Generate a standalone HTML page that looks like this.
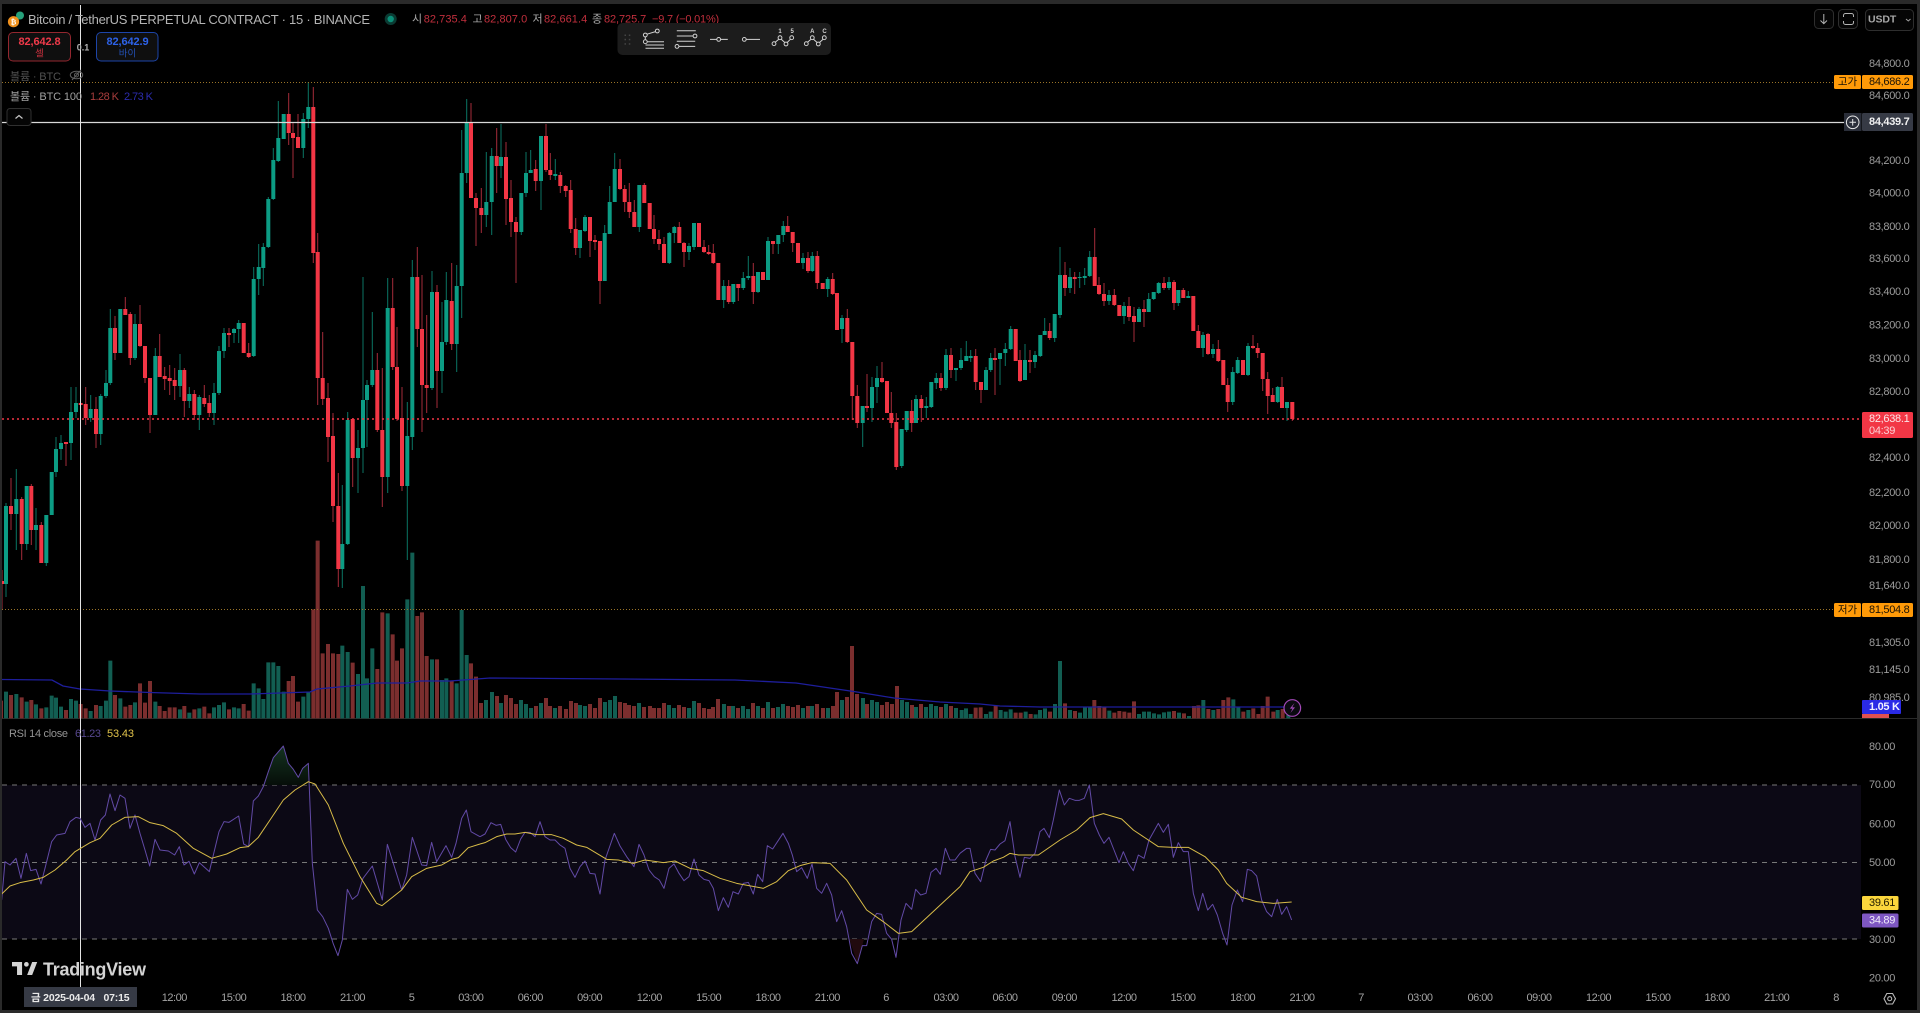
<!DOCTYPE html>
<html lang="ko"><head><meta charset="utf-8"><title>Bitcoin / TetherUS</title>
<style>
html,body{margin:0;padding:0;background:#000;width:1920px;height:1013px;overflow:hidden}
svg{display:block}
text{font-family:"Liberation Sans","Noto Sans CJK KR",sans-serif;white-space:pre}
.p{font-size:11px;letter-spacing:-.3px;fill:#9c9c9c;dominant-baseline:central;transform:translateY(1px)}
.t{font-size:11px;letter-spacing:-.5px;fill:#a4a4a4;text-anchor:middle;dominant-baseline:central}
.c{font-size:11px;letter-spacing:-.3px;dominant-baseline:central}
.h{font-size:11px;dominant-baseline:central;letter-spacing:-.2px}
.l{transform:translateY(1px)}
.r{fill:#c22f3d}
.g{fill:#a8a8a8}
</style></head><body>
<svg width="1920" height="1013" viewBox="0 0 1920 1013" xmlns="http://www.w3.org/2000/svg">
<rect width="1920" height="1013" fill="#000"/>

<!-- RSI band -->
<rect x="2" y="785" width="1859" height="154" fill="#0c0915"/>
<path d="M2 785H1861M2 862.5H1861M2 939H1861" stroke="#787878" stroke-width="1" stroke-dasharray="5 5" fill="none"/>
<path d="M0 718.5H1917" stroke="#2a2a2a" stroke-width="1"/>

<!-- Volume bars -->
<g transform="translate(0,380) scale(.33333)" fill="none" stroke-width="12">
<path stroke="#7b2e2e" d="M3 1015V962M33 1015V945M65 1015V952M94 1015V960M124 1015V985M198 1015V990M242 1015V972M257 1015V985M288 1015V975M345 1015V945M376 1015V980M391 1015V975M420 1015V910M435 1015V968M450 1015V903M479 1015V978M494 1015V993M509 1015V982M524 1015V982M553 1015V978M583 1015V988M613 1015V980M628 1015V1000M687 1015V988M731 1015V972M746 1015V992M866 1015V903M879 1015V888M894 1015V965M940 1015V688M953 1015V482M968 1015V820M984 1015V792M999 1015V820M1015 1015V822M1058 1015V848M1132 1015V867M1147 1015V697M1178 1015V763M1191 1015V842M1206 1015V805M1252 1015V708M1266 1015V697M1280 1015V828M1311 1015V838M1355 1015V903M1413 1015V850M1428 1015V890"/>
<path stroke="#125e52" d="M18 1015V935M49 1015V942M80 1015V965M108 1015V973M139 1015V982M155 1015V947M168 1015V953M183 1015V980M213 1015V957M228 1015V962M272 1015V993M302 1015V978M318 1015V962M331 1015V842M361 1015V955M405 1015V967M466 1015V965M540 1015V988M568 1015V998M598 1015V985M642 1015V982M657 1015V975M672 1015V967M702 1015V982M716 1015V985M761 1015V910M776 1015V925M790 1015V957M805 1015V847M820 1015V847M835 1015V858M851 1015V935M910 1015V950M925 1015V935M1027 1015V797M1043 1015V816M1074 1015V882M1089 1015V618M1101 1015V895M1117 1015V805M1163 1015V700M1222 1015V658M1237 1015V518M1296 1015V838M1326 1015V900M1339 1015V895M1370 1015V910M1385 1015V690M1400 1015V825"/>
</g>
<g fill="none" stroke-width="4">
<path stroke="#7b2e2e" d="M481 718V703M497 718V696M506 718V695M511 718V698M516 718V704M536 718V706M546 718V698M550 718V706M560 718V706M566 718V709M571 718V701M576 718V703M590 718V704M595 718V708M600 718V698M620 718V702M625 718V703M629 718V705M634 718V706M644 718V707M650 718V706M654 718V708M659 718V708M664 718V703M679 718V705M684 718V707M699 718V703M704 718V708M709 718V709M713 718V707M718 718V699M729 718V706M738 718V708M753 718V703M763 718V708M773 718V708M788 718V706M793 718V707M798 718V705M808 718V706M817 718V704M823 718V708M833 718V706M837 718V692M847 718V697M852 718V646M857 718V694M867 718V704M882 718V705M887 718V702M892 718V704M897 718V686M912 718V705M921 718V704M941 718V707M951 718V706"/>
<path stroke="#125e52" d="M486 718V700M492 718V692M501 718V703M521 718V700M526 718V704M531 718V708M541 718V703M555 718V708M580 718V705M585 718V706M605 718V702M610 718V700M615 718V696M639 718V703M669 718V705M674 718V708M689 718V708M694 718V701M724 718V704M733 718V706M743 718V706M748 718V709M758 718V706M768 718V702M778 718V707M783 718V704M803 718V708M812 718V706M828 718V708M842 718V700M863 718V698M872 718V700M877 718V702M902 718V700M907 718V702M916 718V707M926 718V707M931 718V704M936 718V706M946 718V704M956 718V708"/>
</g>
<g transform="translate(960,640) scale(.33333)" fill="none" stroke-width="12">
<path stroke="#7b2e2e" d="M47 235V203M62 235V202M107 235V198M167 235V218M182 235V218M212 235V222M270 235V215M315 235V190M345 235V213M403 235V180M418 235V198M433 235V202M463 235V218M478 235V213M493 235V215M508 235V218M522 235V184M642 235V213M672 235V220M702 235V198M715 235V196M745 235V207M775 235V207M790 235V180M805 235V172M850 235V215M880 235V205M895 235V222M908 235V198M923 235V170M940 235V215M968 235V207"/>
<path stroke="#125e52" d="M5 235V210M18 235V205M32 235V222M78 235V222M92 235V215M122 235V210M137 235V215M152 235V208M197 235V215M227 235V223M240 235V210M255 235V205M285 235V192M300 235V63M330 235V210M360 235V218M375 235V202M390 235V200M448 235V212M537 235V222M552 235V215M567 235V215M582 235V220M597 235V223M612 235V217M627 235V215M657 235V218M687 235V228M730 235V180M760 235V210M820 235V178M835 235V202M865 235V210M953 235V210M985 235V225"/>
</g>
<!-- Volume MA -->
<path fill="none" stroke="#1e1e9c" stroke-width="1.300" d="M2 679.500L52 680 63 686 80 689 110 691 150 692.500 200 694 250 694 310 692 317 689 350 686 377 683 407 683 420 681 450 681 490 678 620 679 735 680 796 683 857 692 894 698 940 702 980 704 1000 706 1040 707 1285 707"/>

<!-- Wicks -->
<g fill="none" stroke-width="1">
<path stroke="#0b7565" d="M6 503V597M16.3 469V550M26.7 486V550M36 508V550M46.3 515V566M56 437V477M61 435V460M71 387V460M76 387V418M90.7 395V422M100.7 394V445M106 370V398M110.3 309V385M135 314V360M155.3 348V415M180 354V397M189.3 387V408M199.3 395V430M214 383V425M219 346V395M224 328V358M234 328V343M238.7 320V343M253.7 267V357M258.7 244V295M263.3 243V286M268.3 197V248M273.3 148V200M278.3 101V162M303.3 113V158M308.3 82V128M342.3 485V588M347.7 412V545M358 430V493M363 277V473M367 380V447M372.3 312V387M387.7 278V493M407.3 402V560M412.3 260V450M432 271V390M442 302V393M446.3 272V345M456.7 265V372M461.7 130V318M466.7 99V183M486.3 152V227M491.7 148V235M501 124V178M521.3 193V235M526 152V197M530.7 150V173M541 136V210M555.3 159V180M580 230V258M585 215V232M604.7 225V281M609.7 186V234M614.7 153V202M639.3 185V232M669.3 232V264M674.3 226V243M689 243V260M694 223V250M723.7 280V308M733.3 284V304M743.3 272V290M748.3 256V280M758 272V293M768 237V280M778.3 235V254M783.3 221V242M803 253V269M812.3 252V272M827.7 277V297M842 315V343M862.7 406V447M872 377V422M877 366V403M901.7 429V468M906.7 411V432M916 395V423M926.3 397V418M931.3 382V408M936.3 373V389M946 349V390M956 368V381M961 348V370M966.3 341V361M970.7 350V362M986 367V390M990.7 353V372M1000 353V385M1005.3 343V366M1010.7 326V350M1025 344V380M1035 351V368M1040.3 335V357M1044.7 318V335M1054.7 314V342M1060 247V318M1070 268V293M1079.7 272V288M1084.7 268V285M1089.7 251V277M1109 290V305M1124 302V324M1139 307V322M1148.7 293V312M1153.7 292V300M1158.7 282V294M1169 277V290M1178.3 290V306M1188.3 291V298M1203 332V357M1213 344V358M1232.7 367V405M1237.7 357V374M1248 343V376M1277.7 386V403M1287 402V421"/>
<path stroke="#a52c3a" d="M2 570V610M11 478V530M21.7 497V560M31.3 484V545M41.3 522V563M66 442V466M85.7 387V425M96 397V448M115 316V360M125.3 297V315M130.3 312V365M140 305V347M145 346V383M150 378V433M159.7 334V377M164.7 367V390M169.7 365V395M174.7 368V400M184.3 368V417M194.3 390V420M204.3 385V407M209.3 395V417M229 328V347M248.7 343V358M288.7 93V145M293 123V178M298 114V148M313.3 87V263M317.7 233V405M322.7 332V405M328 383V462M333 413V522M338.3 473V587M352.7 418V487M377.3 353V432M382.3 368V507M392.7 278V370M397 327V421M402 387V491M417.3 247V347M422 275V432M426.7 315V413M437 285V408M451.7 263V350M471 103V198M476 193V246M481.3 188V233M496.7 128V193M506 142V225M511 180V237M516 217V283M535.7 160V191M546 124V172M550.3 153V180M560.3 172V193M565.7 185V197M570.7 180V233M575.7 218V255M590 217V257M595 235V250M600 241V304M620 159V190M624.7 185V212M629.3 183V218M634.3 200V227M644.3 183V203M654 215V244M659 230V250M664 237V263M679.3 222V243M684 242V267M704 240V253M708.7 245V255M713.3 244V264M728.7 280V304M738.3 284V301M753.3 263V304M773 241V254M787.7 216V232M792.7 232V252M808 252V273M817.3 251V289M832.7 273V295M847.3 309V343M852.3 342V420M857.3 385V428M867 374V412M882 362V383M891.3 392V428M896.3 413V470M911.7 400V432M921.3 395V422M941 373V391M951 348V378M975.7 349V390M981 382V403M995 348V395M1020 350V382M1030 350V373M1049.7 323V340M1065 262V296M1074.7 272V294M1094.7 228V286M1099 277V295M1104 283V306M1114.3 289V306M1129 297V321M1134 307V342M1144 300V327M1164 277V290M1174 280V310M1183.3 288V298M1198.3 325V348M1208 333V355M1218.3 340V362M1227.7 378V412M1253 335V349M1257.7 343V358M1262.7 353V391M1267.7 372V414M1272.7 388V402M1282 377V408M1292.3 402V421"/>
</g>
<!-- Bodies -->
<g fill="none" stroke-width="4">
<path stroke="#0c9c84" d="M6 506V584M16.3 499V514M26.7 486V544M36 525V530M46.3 515V563M51.7 472V515M56 449V472M61 443V449M71 412V443M76 403V412M90.7 409V418M100.7 396V434M106 383V396M110.3 328V383M120.3 309V353M135 324V358M155.3 356V415M180 370V386M189.3 394V401M199.3 397V415M214 393V413M219 351V393M224 333V351M234 329V333M238.7 323V329M253.7 279V356M258.7 267V279M263.3 247V268M268.3 199V247M273.3 160V199M278.3 138V161M283.7 114V139M303.3 119V148M308.3 107V119M342.3 544V569M347.7 420V544M358 448V458M363 400V448M367 385V400M372.3 370V385M387.7 308V477M407.3 436V486M412.3 277V437M432 292V388M442 342V371M446.3 300V342M456.7 286V344M461.7 173V286M466.7 123V173M486.3 202V215M491.7 156V202M501 157V166M521.3 193V232M526 173V193M530.7 170V173M541 136V181M555.3 174V176M580 230V248M585 217V231M604.7 233V281M609.7 202V234M614.7 169V202M639.3 185V227M669.3 233V263M674.3 227V233M689 246V252M694 223V247M723.7 286V300M733.3 284V302M743.3 278V288M748.3 276V278M758 272V292M768 241V280M778.3 235V244M783.3 226V235M803 258V263M812.3 256V271M827.7 279V289M842 318V329M862.7 406V423M872 387V408M877 378V387M901.7 429V466M906.7 411V430M916 399V423M926.3 406V408M931.3 382V407M936.3 378V383M946 355V388M956 368V370M961 360V368M966.3 356V361M970.7 356V358M986 370V390M990.7 358V370M1000 353V359M1005.3 349V353M1010.7 329V349M1025 360V380M1035 355V362M1040.3 335V356M1044.7 331V335M1054.7 314V338M1060 275V315M1070 277V288M1079.7 277V278M1084.7 276V278M1089.7 257V276M1109 295V301M1124 306V316M1139 309V322M1148.7 299V312M1153.7 292V299M1158.7 283V293M1169 282V288M1178.3 290V303M1188.3 296V298M1203 335V348M1213 349V354M1232.7 372V402M1237.7 360V373M1248 346V375M1277.7 387V402M1287 402V408"/>
<path stroke="#f23645" d="M2 581V584M11 506V514M21.7 499V544M31.3 486V530M41.3 525V563M66 442V444M80.7 403V405M85.7 404V418M96 409V434M115 328V353M125.3 309V315M130.3 314V358M140 324V346M145 346V378M150 378V415M159.7 356V377M164.7 376V379M169.7 378V381M174.7 380V386M184.3 370V401M194.3 394V415M204.3 398V404M209.3 403V413M229 333V335M243.7 323V353M248.7 353V357M288.7 114V133M293 133V138M298 137V148M313.3 107V253M317.7 252V378M322.7 378V399M328 398V437M333 436V506M338.3 506V569M352.7 419V458M377.3 370V430M382.3 430V477M392.7 308V367M397 367V419M402 418V486M417.3 277V329M422 329V385M426.7 385V388M437 292V371M451.7 301V344M471 123V198M476 198V208M481.3 208V215M496.7 156V166M506 157V199M511 198V222M516 222V232M535.7 169V181M546 136V170M550.3 170V175M560.3 175V186M565.7 186V191M570.7 190V229M575.7 229V248M590 217V241M595 240V242M600 241V281M620 169V189M624.7 189V202M629.3 202V212M634.3 212V227M644.3 185V203M649.7 203V229M654 229V239M659 239V244M664 244V263M679.3 227V243M684 243V252M699 223V247M704 247V252M708.7 252V254M713.3 253V263M718.3 263V300M728.7 286V302M738.3 284V288M753.3 276V292M763 272V280M773 241V244M787.7 226V232M792.7 232V243M798 243V263M808 258V271M817.3 256V283M822.7 283V289M832.7 279V294M837 293V330M847.3 318V342M852.3 342V396M857.3 396V423M867 406V408M882 378V382M887 381V413M891.3 413V423M896.3 422V467M911.7 411V423M921.3 399V408M941 378V388M951 355V370M975.7 356V382M981 382V390M995 358V360M1015.7 329V361M1020 360V381M1030 360V362M1049.7 331V338M1065 275V288M1074.7 277V279M1094.7 257V286M1099 285V294M1104 294V301M1114.3 295V305M1119.3 305V316M1129 306V317M1134 316V322M1144 309V312M1164 283V288M1174 282V303M1183.3 290V298M1193.3 296V331M1198.3 331V348M1208 334V354M1218.3 349V361M1223.3 360V385M1227.7 385V402M1243 360V375M1253 346V348M1257.7 348V353M1262.7 353V379M1267.7 379V396M1272.7 395V402M1282 387V408M1292.3 402V419"/>
</g>

<!-- Lines -->
<path d="M2 82.500H1834M2 609.500H1834" stroke="#9a7428" stroke-width="1" stroke-dasharray="1 2"/>
<path d="M2 419H1862" stroke="#f23645" stroke-width="1.400" stroke-dasharray="2 3"/>
<path d="M2 122.500H1844" stroke="#d8d8d8" stroke-width="1.200"/>
<path d="M80.500 5V987" stroke="#e4e4e4" stroke-width="1"/>

<!-- RSI -->
<defs><linearGradient id="gg" x1="0" y1="0" x2="0" y2="1"><stop offset="0" stop-color="#143320"/><stop offset="1" stop-color="#060e09"/></linearGradient></defs>
<g transform="translate(0,720) scale(.33333)">
<path fill="url(#gg)" d="M790 195L805 155 820 113 850 78 865 130 880 148 895 172 908 145 925 130 928 195Z"/>
<path fill="none" stroke="#624aa6" stroke-width="1" vector-effect="non-scaling-stroke" stroke-linejoin="round" d="M5 540L15 425 30 435 48 415 63 475 79 400 92 452 108 448 123 492 140 425 155 365 170 345 195 340 210 305 228 292 240 295 255 322 270 310 285 360 302 300 316 285 330 222 345 272 360 225 375 235 390 325 405 285 420 340 435 390 449 438 465 358 480 390 505 393 524 405 538 380 552 435 567 424 583 462 598 428 628 455 657 335 672 305 687 307 716 288 731 372 746 380 760 243 775 228 790 200 805 155 820 113 850 78 865 130 880 148 895 172 908 145 925 130 937 430 952 570 968 590 985 625 1000 672 1014 707 1027 660 1042 508 1057 538 1073 525 1089 475 1117 438 1147 540 1162 373 1205 510 1220 465 1237 352 1265 435 1280 437 1295 367 1310 425 1338 377 1355 412 1368 370 1385 295 1399 270 1413 335 1440 350"/>
<path fill="none" stroke="#d8bc48" stroke-width="1" vector-effect="non-scaling-stroke" stroke-linejoin="round" d="M5 522L30 498 60 488 100 480 130 472 165 450 200 420 225 395 270 368 300 355 335 315 375 292 415 290 450 308 490 317 530 340 580 385 635 415 680 402 720 383 745 380 775 352 810 300 850 240 885 210 925 185 945 192 985 255 1030 370 1080 470 1130 550 1146 557 1205 510 1235 470 1280 445 1325 435 1355 418 1375 413 1405 383 1440 372"/>
</g>
<g transform="translate(480,720) scale(.33333)">
<path fill="#210a0e" d="M1108 657L1132 731 1147 677 1152 657Z"/>
<path fill="none" stroke="#624aa6" stroke-width="1" vector-effect="non-scaling-stroke" stroke-linejoin="round" d="M0 350L15 342 33 308 48 316 62 313 77 358 92 383 107 396 122 357 135 337 150 337 165 350 180 305 195 350 210 360 225 360 240 375 255 385 270 445 285 472 300 440 315 423 330 460 345 462 360 522 375 420 403 340 420 378 440 410 462 440 477 373 492 405 507 450 523 470 538 480 552 505 567 445 582 432 597 460 612 482 627 470 642 417 657 465 672 478 687 482 700 505 715 572 730 533 745 562 759 515 775 522 790 490 805 487 820 522 833 463 848 485 862 377 878 387 909 340 925 370 937 405 950 455 965 443 982 475 996 432 1010 505 1025 520 1040 490 1055 525 1070 605 1085 572 1100 620 1115 700 1132 731 1147 677 1160 677 1175 605 1190 580 1205 583 1220 640 1235 658 1248 712 1263 600 1278 550 1295 568 1307 508 1322 525 1338 520 1353 457 1368 445 1381 463 1396 385 1410 420 1425 420 1440 400"/>
<path fill="none" stroke="#d8bc48" stroke-width="1" vector-effect="non-scaling-stroke" stroke-linejoin="round" d="M0 372L15 368 50 350 80 342 105 342 135 337 170 344 215 344 250 355 290 375 320 382 350 400 380 418 415 420 460 430 495 420 550 428 585 423 630 445 670 452 720 475 770 490 850 505 890 485 925 452 960 437 995 428 1050 430 1100 480 1160 570 1210 605 1255 640 1295 635 1370 565 1440 500"/>
</g>
<g transform="translate(960,640) scale(.33333)">
<path fill="none" stroke="#624aa6" stroke-width="1" vector-effect="non-scaling-stroke" stroke-linejoin="round" d="M0 640L20 625 30 625 45 700 62 725 78 660 92 628 105 630 120 612 135 602 150 545 165 650 180 712 193 652 210 655 225 640 240 575 252 565 268 593 280 540 298 450 313 495 328 475 345 481 358 481 373 475 388 435 403 550 418 585 432 610 447 592 462 630 477 668 490 635 505 670 520 692 535 645 552 655 567 600 595 550 610 577 625 553 640 652 655 608 670 635 685 635 700 760 715 812 728 760 743 810 758 793 772 825 788 880 801 915 816 795 832 750 848 785 862 688 875 692 890 708 905 780 920 815 935 830 952 778 965 823 980 800 995 840"/>
<path fill="none" stroke="#d8bc48" stroke-width="1" vector-effect="non-scaling-stroke" stroke-linejoin="round" d="M0 740L30 695 70 682 100 663 130 652 150 640 175 645 235 645 300 600 350 570 390 533 430 521 485 537 520 570 595 620 640 622 685 622 735 650 775 690 800 730 845 772 890 785 940 790 995 786"/>
</g>

<!-- Lightning -->
<circle cx="1292.300" cy="708" r="8.300" fill="#0a0a10" stroke="#a349b8" stroke-width="1.200"/>
<path d="M1294.500 703L1289.800 708.600H1292.600L1290.400 713 1295 707.400H1292.200Z" fill="#a349b8"/>

<!-- Header -->
<circle cx="20" cy="15.500" r="4" fill="#26a17b"/>
<circle cx="13.500" cy="21.700" r="5.600" fill="#f0901c"/>
<text x="13.500" y="24.300" font-size="7" fill="#fff" text-anchor="middle" font-weight="700">₿</text>
<text x="28" y="19.500" font-size="13" fill="#b4b4b4" dominant-baseline="central" textLength="342" lengthAdjust="spacing">Bitcoin / TetherUS PERPETUAL CONTRACT · 15 · BINANCE</text>
<circle cx="390.700" cy="19" r="6" fill="#0a3b33"/><circle cx="390.700" cy="19" r="3.200" fill="#0b8f78"/>
<text x="412" y="19.500" class="h g">시</text><text x="423.700" y="19.500" class="h r" textLength="43" lengthAdjust="spacing">82,735.4</text>
<text x="472.500" y="19.500" class="h g">고</text><text x="484" y="19.500" class="h r" textLength="43" lengthAdjust="spacing">82,807.0</text>
<text x="532.500" y="19.500" class="h g">저</text><text x="544" y="19.500" class="h r" textLength="43" lengthAdjust="spacing">82,661.4</text>
<text x="592" y="19.500" class="h g">종</text><text x="604" y="19.500" class="h r" textLength="42" lengthAdjust="spacing">82,725.7</text>
<text x="652" y="19.500" class="h r" textLength="67" lengthAdjust="spacing">−9.7 (−0.01%)</text>

<!-- Buy/sell -->
<rect x="8.500" y="32.500" width="62" height="28.500" rx="4.500" fill="#0f0f0f" stroke="#93272f"/>
<text x="39.500" y="42" font-size="11" fill="#f03a4a" text-anchor="middle" dominant-baseline="central" letter-spacing="-.1" font-weight="700">82,642.8</text>
<text x="39.500" y="54" font-size="9.500" fill="#c8303e" text-anchor="middle" dominant-baseline="central">셀</text>
<rect x="96.500" y="32.500" width="61.500" height="28.500" rx="4.500" fill="#0f0f0f" stroke="#1d45a8"/>
<text x="127.500" y="42" font-size="11" fill="#2d62e8" text-anchor="middle" dominant-baseline="central" letter-spacing="-.1" font-weight="700">82,642.9</text>
<text x="127.500" y="54" font-size="9.500" fill="#2350b4" text-anchor="middle" dominant-baseline="central">바이</text>
<text x="83" y="47.500" font-size="9" font-weight="700" fill="#b4b4b4" text-anchor="middle" dominant-baseline="central">0.1</text>

<!-- Legends -->
<text x="10" y="76" class="l" font-size="11" fill="#505050" dominant-baseline="central" textLength="51" lengthAdjust="spacing">볼륨 · BTC</text>
<ellipse cx="76.500" cy="75" rx="6.200" ry="3.800" fill="none" stroke="#5e5e5e"/><circle cx="76.500" cy="75" r="2" fill="none" stroke="#5e5e5e"/><path d="M72 80L81 70" stroke="#5e5e5e"/>
<text x="10" y="96" class="l" font-size="11" fill="#a0a0a0" dominant-baseline="central" textLength="72" lengthAdjust="spacing">볼륨 · BTC 100</text>
<text x="90" y="96" class="l" font-size="11" fill="#a83d3d" dominant-baseline="central" textLength="29" lengthAdjust="spacing">1.28 K</text>
<text x="124" y="96" class="l" font-size="11" fill="#2c2cae" dominant-baseline="central" textLength="29" lengthAdjust="spacing">2.73 K</text>
<rect x="7" y="108.500" width="24" height="17" rx="3" fill="#050505" stroke="#303030"/>
<path d="M15.500 118.500L19 115.500 22.500 118.500" fill="none" stroke="#c8c8c8" stroke-width="1.200"/>
<text x="9" y="733" class="l" font-size="11" fill="#949494" dominant-baseline="central" textLength="59" lengthAdjust="spacing">RSI 14 close</text>
<text x="75" y="733" class="l" font-size="11" fill="#57488f" dominant-baseline="central" textLength="26" lengthAdjust="spacing">61.23</text>
<text x="107" y="733" class="l" font-size="11" fill="#e0c24a" dominant-baseline="central" textLength="27" lengthAdjust="spacing">53.43</text>

<!-- Toolbar -->
<rect x="617.500" y="23" width="213.500" height="32" rx="5" fill="#1c1c1c"/>
<g fill="#454545"><rect x="624.500" y="34.500" width="1.500" height="1.500"/><rect x="628.800" y="34.500" width="1.500" height="1.500"/><rect x="624.500" y="38.800" width="1.500" height="1.500"/><rect x="628.800" y="38.800" width="1.500" height="1.500"/><rect x="624.500" y="43.200" width="1.500" height="1.500"/><rect x="628.800" y="43.200" width="1.500" height="1.500"/></g>
<g fill="none" stroke="#d2d2d2" stroke-width="1">
<circle cx="645.300" cy="35" r="1.900"/><circle cx="657.300" cy="31" r="1.900"/><circle cx="645.300" cy="41.700" r="1.900"/>
<path d="M647 34.200L655.500 31.600M645.300 36.900V39.800M647.200 41.800H664M645.500 45H664M645.500 48.300H664"/>
<path d="M676.800 30.700H695.800M676.800 36H693.200M676.800 41.300H695.200M679 46.400H695.200"/>
<circle cx="695" cy="36" r="1.900"/><circle cx="677" cy="46.400" r="1.900"/>
<path d="M710 39.400H716.800M720.600 39.400H727.800"/><circle cx="718.700" cy="39.400" r="1.900"/>
<circle cx="744.300" cy="39.400" r="1.900"/><path d="M746.200 39.400H760"/>
<path d="M775.200 42.200L778.800 39.200M781.200 39.200L784.800 42.500M787.200 42.500L790.500 39.200"/>
<circle cx="774" cy="43.700" r="1.900"/><circle cx="780" cy="37.700" r="1.900"/><circle cx="786" cy="44" r="1.900"/><circle cx="791.700" cy="37.700" r="1.900"/>
<path d="M807.500 42.200L811.100 39.200M813.500 39.200L817.100 42.500M819.500 42.500L823.100 39.200"/>
<circle cx="806.300" cy="43.700" r="1.900"/><circle cx="812.300" cy="37.700" r="1.900"/><circle cx="818.300" cy="44" r="1.900"/><circle cx="824.300" cy="37.700" r="1.900"/>
</g>
<g font-size="6" font-weight="700" fill="#d2d2d2" text-anchor="middle">
<text x="780" y="33.200">1</text><text x="792.200" y="33.200">5</text><text x="812.300" y="33.200">A</text><text x="824.500" y="33.200">C</text>
</g>

<!-- Right axis buttons -->
<rect x="1814.500" y="9.500" width="19" height="19" rx="4" fill="#050505" stroke="#2e2e2e"/>
<path d="M1823.800 14V23.500M1820.500 20.500L1823.800 23.700 1827 20.500" fill="none" stroke="#b4b4b4"/>
<rect x="1838.500" y="9.500" width="19" height="19" rx="4" fill="#050505" stroke="#2e2e2e"/>
<path d="M1843.500 17.500V16a2 2 0 0 1 2-2h6a2 2 0 0 1 2 2V17.500M1843.500 21.500V23a2 2 0 0 0 2 2h6a2 2 0 0 0 2-2V21.500" fill="none" stroke="#b4b4b4" transform="translate(0,-.5)"/>
<rect x="1865.500" y="9.500" width="48" height="21" rx="4" fill="#050505" stroke="#2e2e2e"/>
<text x="1868" y="19.500" font-size="10.500" fill="#a8a8a8" dominant-baseline="central" letter-spacing="-.1" font-weight="700">USDT</text>
<path d="M1906 19L1908.300 21 1910.500 19" fill="none" stroke="#a0a0a0"/>

<!-- Price axis -->
<g>
<text x="1869" y="63" class="p">84,800.0</text><text x="1869" y="95" class="p">84,600.0</text>
<text x="1869" y="160" class="p">84,200.0</text><text x="1869" y="192.500" class="p">84,000.0</text>
<text x="1869" y="226" class="p">83,800.0</text><text x="1869" y="258" class="p">83,600.0</text>
<text x="1869" y="291" class="p">83,400.0</text><text x="1869" y="324.500" class="p">83,200.0</text>
<text x="1869" y="358" class="p">83,000.0</text><text x="1869" y="391" class="p">82,800.0</text>
<text x="1869" y="457" class="p">82,400.0</text><text x="1869" y="492" class="p">82,200.0</text>
<text x="1869" y="525" class="p">82,000.0</text><text x="1869" y="559" class="p">81,800.0</text>
<text x="1869" y="585" class="p">81,640.0</text><text x="1869" y="642" class="p">81,305.0</text>
<text x="1869" y="669" class="p">81,145.0</text><text x="1869" y="697" class="p">80,985.0</text>
<text x="1869" y="746" class="p">80.00</text><text x="1869" y="784" class="p">70.00</text>
<text x="1869" y="823.500" class="p">60.00</text><text x="1869" y="862" class="p">50.00</text>
<text x="1869" y="939" class="p">30.00</text><text x="1869" y="977.500" class="p">20.00</text>
</g>
<rect x="1834" y="75" width="27" height="14" rx="1.500" fill="#ff9a08"/>
<rect x="1862" y="75" width="51" height="14" rx="1.500" fill="#ff9a08"/>
<text x="1847.500" y="82" font-size="10.500" fill="#1a1206" text-anchor="middle" dominant-baseline="central">고가</text>
<text x="1869" y="82" class="c" fill="#1a1206">84,686.2</text>
<rect x="1844" y="113" width="17.500" height="18" fill="#2a2e39"/>
<circle cx="1852.700" cy="122.300" r="6.300" fill="none" stroke="#e6e6e6"/><path d="M1849.500 122.300H1856M1852.700 119V125.600" stroke="#e6e6e6"/>
<rect x="1862" y="113" width="51" height="18" rx="1.500" fill="#363a45"/>
<text x="1869" y="122" class="c" fill="#f0f0f0" font-weight="700">84,439.7</text>
<rect x="1862" y="412" width="51" height="26" rx="1.500" fill="#f23645"/>
<text x="1869" y="419" class="c" fill="#fbe6e8">82,638.1</text>
<text x="1869" y="431" class="c" fill="#fbd0d4">04:39</text>
<rect x="1834" y="603" width="27" height="14" rx="1.500" fill="#ff9a08"/>
<rect x="1862" y="603" width="51" height="14" rx="1.500" fill="#ff9a08"/>
<text x="1847.500" y="610" font-size="10.500" fill="#1a1206" text-anchor="middle" dominant-baseline="central">저가</text>
<text x="1869" y="610" class="c" fill="#1a1206">81,504.8</text>
<rect x="1862" y="714" width="27" height="4" fill="#e05050"/>
<rect x="1862" y="700" width="39" height="14" rx="1" fill="#2a2ae6"/>
<text x="1869" y="707" class="c" fill="#f0f0ff" font-weight="700">1.05 K</text>
<rect x="1862" y="896" width="36.500" height="14" rx="1.500" fill="#fbd63c"/>
<text x="1869" y="903" class="c" fill="#221c00">39.61</text>
<rect x="1862" y="913.500" width="36.500" height="14" rx="1.500" fill="#7e57c2"/>
<text x="1869" y="920.500" class="c" fill="#f0ecfa">34.89</text>

<!-- Time axis -->
<g>
<text x="174.300" y="998" class="t">12:00</text><text x="233.700" y="998" class="t">15:00</text><text x="293" y="998" class="t">18:00</text><text x="352.500" y="998" class="t">21:00</text><text x="411.500" y="998" class="t">5</text><text x="470.800" y="998" class="t">03:00</text><text x="530.300" y="998" class="t">06:00</text><text x="589.600" y="998" class="t">09:00</text><text x="649.300" y="998" class="t">12:00</text><text x="708.600" y="998" class="t">15:00</text><text x="768" y="998" class="t">18:00</text><text x="827.300" y="998" class="t">21:00</text><text x="886" y="998" class="t">6</text><text x="946" y="998" class="t">03:00</text><text x="1005" y="998" class="t">06:00</text><text x="1064.300" y="998" class="t">09:00</text><text x="1124" y="998" class="t">12:00</text><text x="1183" y="998" class="t">15:00</text><text x="1242.600" y="998" class="t">18:00</text><text x="1302" y="998" class="t">21:00</text><text x="1361" y="998" class="t">7</text><text x="1420" y="998" class="t">03:00</text><text x="1480" y="998" class="t">06:00</text><text x="1539" y="998" class="t">09:00</text><text x="1598.500" y="998" class="t">12:00</text><text x="1658" y="998" class="t">15:00</text><text x="1717" y="998" class="t">18:00</text><text x="1776.700" y="998" class="t">21:00</text><text x="1836" y="998" class="t">8</text>
</g>
<rect x="24" y="987" width="113" height="20" fill="#363a45"/>
<text x="31" y="998" font-size="10.500" fill="#eaeaea" dominant-baseline="central" letter-spacing="-.2" font-weight="700">금 2025-04-04</text>
<text x="103.500" y="998" font-size="10.500" fill="#eaeaea" dominant-baseline="central" letter-spacing="-.2" font-weight="700">07:15</text>

<!-- TradingView logo -->
<path transform="translate(12,962) scale(.72)" fill="#d4d4d4" d="M14 0H0v6h7v12h7V0ZM28 18h-7l7-18h7l-7 18ZM20 6.500a3.250 3.250 0 1 0 0-6.500 3.250 3.250 0 0 0 0 6.500Z"/>
<text x="43" y="969.500" font-size="18" font-weight="700" fill="#d4d4d4" dominant-baseline="central" textLength="103" lengthAdjust="spacing">TradingView</text>

<!-- Settings -->
<path d="M1884 998.700L1886.800 993.500H1892.600L1895.500 998.700 1892.600 1004H1886.800Z" fill="none" stroke="#b8b8b8" stroke-width="1.100"/>
<circle cx="1889.700" cy="998.700" r="2" fill="none" stroke="#b8b8b8" stroke-width="1.100"/>

<!-- Frame -->
<rect x="0" y="0" width="1920" height="4" fill="#2a2a2a"/>
<rect x="0" y="1010" width="1920" height="3" fill="#2a2a2a"/>
<rect x="0" y="0" width="2" height="1013" fill="#2a2a2a"/>
<rect x="1917" y="0" width="3" height="1013" fill="#2a2a2a"/>
</svg>
</body></html>
